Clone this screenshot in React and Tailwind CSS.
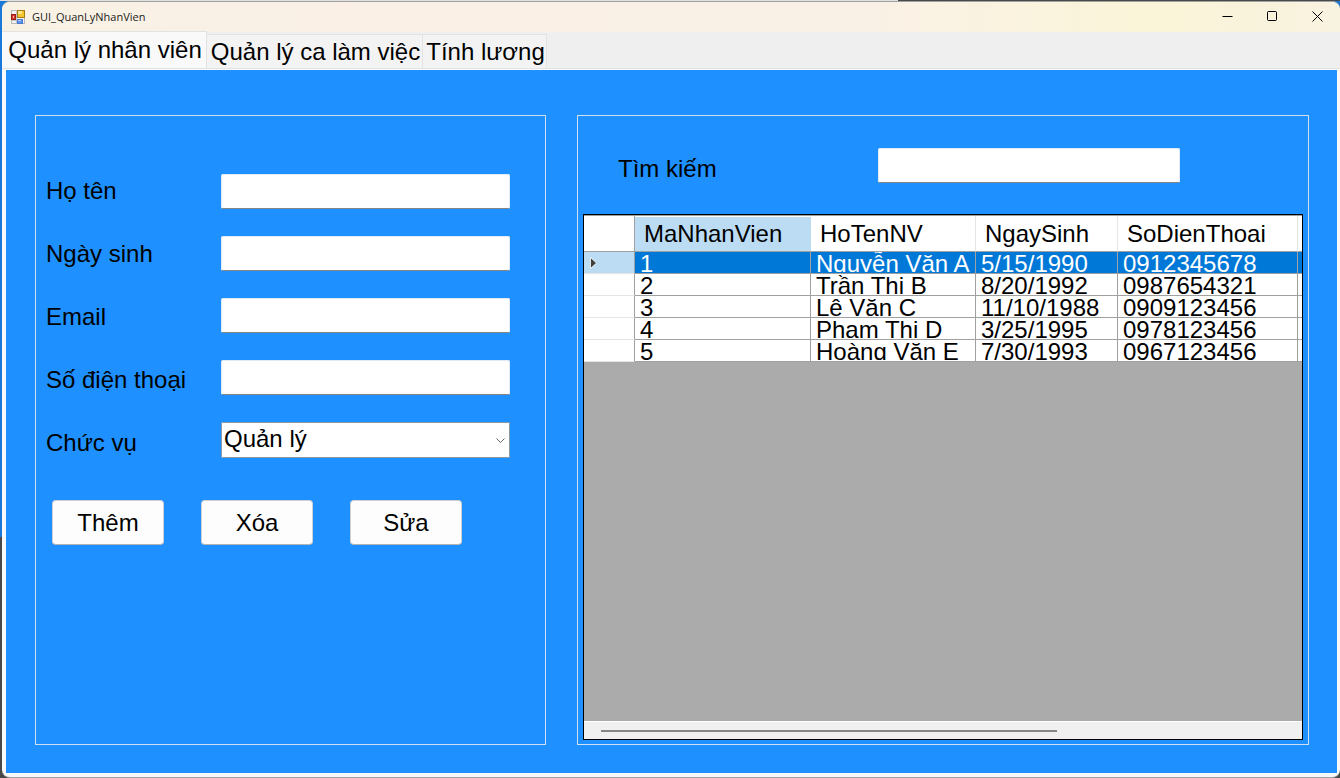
import React, { useState } from "react";

const tabs = [
  { label: "Quản lý nhân viên", width: "w-[205px]" },
  { label: "Quản lý ca làm việc", width: "w-[216px]" },
  { label: "Tính lương", width: "w-[124px]" },
];

const fields = [
  { id: "name", label: "Họ tên" },
  { id: "birth", label: "Ngày sinh" },
  { id: "email", label: "Email" },
  { id: "phone", label: "Số điện thoại" },
];

const rows = [
  ["1", "Nguyễn Văn A", "5/15/1990", "0912345678"],
  ["2", "Trần Thị B", "8/20/1992", "0987654321"],
  ["3", "Lê Văn C", "11/10/1988", "0909123456"],
  ["4", "Phạm Thị D", "3/25/1995", "0978123456"],
  ["5", "Hoàng Văn E", "7/30/1993", "0967123456"],
];

const inputClass =
  "h-[35px] min-w-0 rounded-[2px] border border-[#e3ecf5] border-b-[#868686] bg-white px-1 outline-none";

function AppIcon() {
  return (
    <svg width="14" height="14" viewBox="0 0 14 14" aria-hidden="true">
      <rect x="0.5" y="0.5" width="13" height="13" fill="#f4f4f4" stroke="#b9b9b9" />
      <path d="M5.5 0.5V13.5M0.5 10.5H5" stroke="#c4c4c4" />
      <rect x="0.5" y="4.5" width="4" height="5" fill="#d5392b" stroke="#9c1d14" />
      <rect x="2" y="6" width="1" height="2" fill="#f6b0a8" />
      <rect x="6.5" y="0.5" width="7" height="7" fill="#f6c42c" stroke="#a87c14" />
      <rect x="7" y="1" width="4" height="3" fill="#fde58a" />
      <rect x="6.5" y="9.5" width="5" height="4" fill="#5c94ee" stroke="#4a7ad0" />
      <rect x="7" y="10" width="3" height="1" fill="#b4d0fa" />
    </svg>
  );
}

function TitleBar() {
  const control = "flex h-full w-[45px] items-center justify-center pb-[2px]";
  return (
    <header className="flex h-[30px] shrink-0 items-center bg-[linear-gradient(90deg,#f8f2e4_0%,#faf0e6_25%,#faf1e6_65%,#faf4d8_86%,#f8f2e0_100%)] pl-[9px]">
      <AppIcon />
      <h1 className="ml-[7px] flex-1 font-['Open_Sans','Noto_Sans',sans-serif] text-[11px] leading-4 text-[#1b1b1b]">
        GUI_QuanLyNhanVien
      </h1>
      <button type="button" aria-label="Minimize" className={control}>
        <svg width="11" height="11" viewBox="0 0 11 11"><path d="M0.5 5.5H10.5" stroke="#000" /></svg>
      </button>
      <button type="button" aria-label="Maximize" className={control}>
        <svg width="11" height="11" viewBox="0 0 11 11"><rect x="0.5" y="0.5" width="9" height="9" rx="1" fill="none" stroke="#000" /></svg>
      </button>
      <button type="button" aria-label="Close" className={control}>
        <svg width="11" height="11" viewBox="0 0 11 11"><path d="M0.5 0.5L10.5 10.5M10.5 0.5L0.5 10.5" stroke="#000" /></svg>
      </button>
    </header>
  );
}

function TabBar({ active, onSelect }) {
  return (
    <div role="tablist" className="flex h-[37px] shrink-0 items-end border-b border-[#e3e3e3] bg-[#efefef]">
      {tabs.map((tab, i) => (
        <button
          key={tab.label}
          type="button"
          role="tab"
          aria-selected={i === active}
          onClick={() => onSelect(i)}
          className={
            (i === active
              ? "h-[37px] border-t border-r border-[#e3e3e3] bg-[#f9f9f9] pl-[2px] whitespace-nowrap "
              : "h-[34px] border-t border-r border-[#e3e3e3] bg-[#f3f3f3] pl-[2px] whitespace-nowrap ") + tab.width
          }
        >
          {tab.label}
        </button>
      ))}
    </div>
  );
}

function EmployeeForm() {
  return (
    <form className="border border-[#cfe0f0] pt-[58px] pr-[35px] pl-[10px]" onSubmit={(e) => e.preventDefault()}>
      <div className="grid grid-cols-[175px_minmax(0,1fr)]">
        <div className="flex flex-col items-start gap-[35px] pt-[3px]">
          {fields.map((f) => (
            <label key={f.id} htmlFor={f.id}>{f.label}</label>
          ))}
          <label htmlFor="role">Chức vụ</label>
        </div>
        <div className="flex flex-col gap-[27px]">
          {fields.map((f) => (
            <input key={f.id} id={f.id} type="text" className={inputClass} />
          ))}
          <div className="relative">
            <select id="role" className="h-[36px] w-full appearance-none rounded-[1px] border border-[#8c9aa8] bg-white pb-[2px] pl-[2px] outline-none">
              <option>Quản lý</option>
              <option>Nhân viên</option>
            </select>
            <svg className="pointer-events-none absolute top-4 right-1" width="10" height="6" viewBox="0 0 10 6" aria-hidden="true">
              <path d="M0.5 0.5L4.5 4.5L8.5 0.5" fill="none" stroke="#666" />
            </svg>
          </div>
        </div>
      </div>
      <div className="mt-[42px] flex gap-[37px] pl-[6px]">
        {["Thêm", "Xóa", "Sửa"].map((b) => (
          <button key={b} type="button" className="h-[45px] w-[112px] rounded-[4px] border border-[#d0d0d0] border-b-[#b4b4b4] bg-[#fdfdfd]">
            {b}
          </button>
        ))}
      </div>
    </form>
  );
}

function EmployeeTable() {
  const headers = ["HoTenNV", "NgaySinh", "SoDienThoai"];
  return (
    <div className="flex min-h-0 flex-1 flex-col overflow-hidden border border-black bg-[#ababab]">
      <table className="w-full table-fixed border-separate border-spacing-0 border-t border-[#a0a0a0] bg-white text-left">
        <colgroup>
          <col className="w-[51px]" />
          <col className="w-[176px]" />
          <col className="w-[165px]" />
          <col className="w-[142px]" />
          <col className="w-[180px]" />
          <col />
        </colgroup>
        <thead>
          <tr className="h-[36px]">
            <th className="border-r border-b border-[#a0a0a0] p-0" />
            <th className="border-t border-b border-t-white border-b-[#a0a0a0] bg-[#bcdcf4] p-0 pl-[9px] font-normal">MaNhanVien</th>
            {headers.map((h) => (
              <th key={h} className="border-r border-b border-r-[#e5e5e5] border-b-[#a0a0a0] p-0 pl-[9px] font-normal">{h}</th>
            ))}
            <th className="border-b border-[#a0a0a0] p-0" />
          </tr>
        </thead>
        <tbody>
          {rows.map((row, i) => (
            <tr key={row[0]} className={i === 0 ? "h-[22px] bg-[#0078d7] text-white" : "h-[22px]"}>
              <th
                scope="row"
                className={
                  i === 0
                    ? "border-r border-b border-r-[#a0a0a0] border-b-[#e5e5e5] bg-[#bcdcf4] p-0 pl-[6px]"
                    : "border-r border-b border-r-[#a0a0a0] border-b-[#e5e5e5] p-0"
                }
              >
                {i === 0 && (
                  <svg width="7" height="12" viewBox="0 0 7 12" className="block" aria-hidden="true">
                    <path d="M0.5 0.5L6.5 6L0.5 11.5Z" fill="#404040" stroke="#fff" strokeWidth="0.8" />
                  </svg>
                )}
              </th>
              {row.map((cell) => (
                <td key={cell} className="border-r border-b border-[#a0a0a0] p-0 pb-px pl-[5px]">
                  <div className="h-[20px] overflow-hidden leading-6 whitespace-nowrap">{cell}</div>
                </td>
              ))}
              <td className="border-b border-[#a0a0a0] p-0" />
            </tr>
          ))}
        </tbody>
      </table>
      <div className="mt-auto flex h-[18px] items-center border-t border-white bg-[#f0f0f0] px-[17px]">
        <div className="h-[2px] w-2/3 bg-[#868686]" />
      </div>
    </div>
  );
}

function SearchPanel() {
  return (
    <section className="flex flex-col border border-[#cfe0f0] px-[5px] pt-[32px] pb-[4px]">
      <div className="mb-[31px] flex pl-[35px]">
        <label htmlFor="search" className="w-[260px] pt-[7px]">Tìm kiếm</label>
        <input id="search" type="text" className={inputClass + " w-[302px]"} />
      </div>
      <EmployeeTable />
    </section>
  );
}

export default function App() {
  const [active, setActive] = useState(0);
  return (
    <div className="flex min-h-screen flex-col bg-[linear-gradient(180deg,#1a78d8_69%,#484848_69%)] font-['Liberation_Sans',Arial,sans-serif] text-[24px] leading-[28px] text-black">
      <div className="h-px bg-[linear-gradient(90deg,#e0e0e0_67%,#484848_67%)]" />
      <div className="ml-[2px] flex flex-1 flex-col overflow-hidden rounded-[8px] border-t border-b border-[#a0a0a0] bg-[#f9f9f9]">
        <TitleBar />
        <TabBar active={active} onSelect={setActive} />
        <main className="mt-px mr-[3px] mb-[4px] ml-[4px] grid flex-1 grid-cols-[minmax(0,511fr)_minmax(0,732fr)] gap-[31px] bg-[#1e90ff] pt-[45px] pr-[28px] pb-[28px] pl-[29px]">
          <EmployeeForm />
          <SearchPanel />
        </main>
      </div>
    </div>
  );
}
